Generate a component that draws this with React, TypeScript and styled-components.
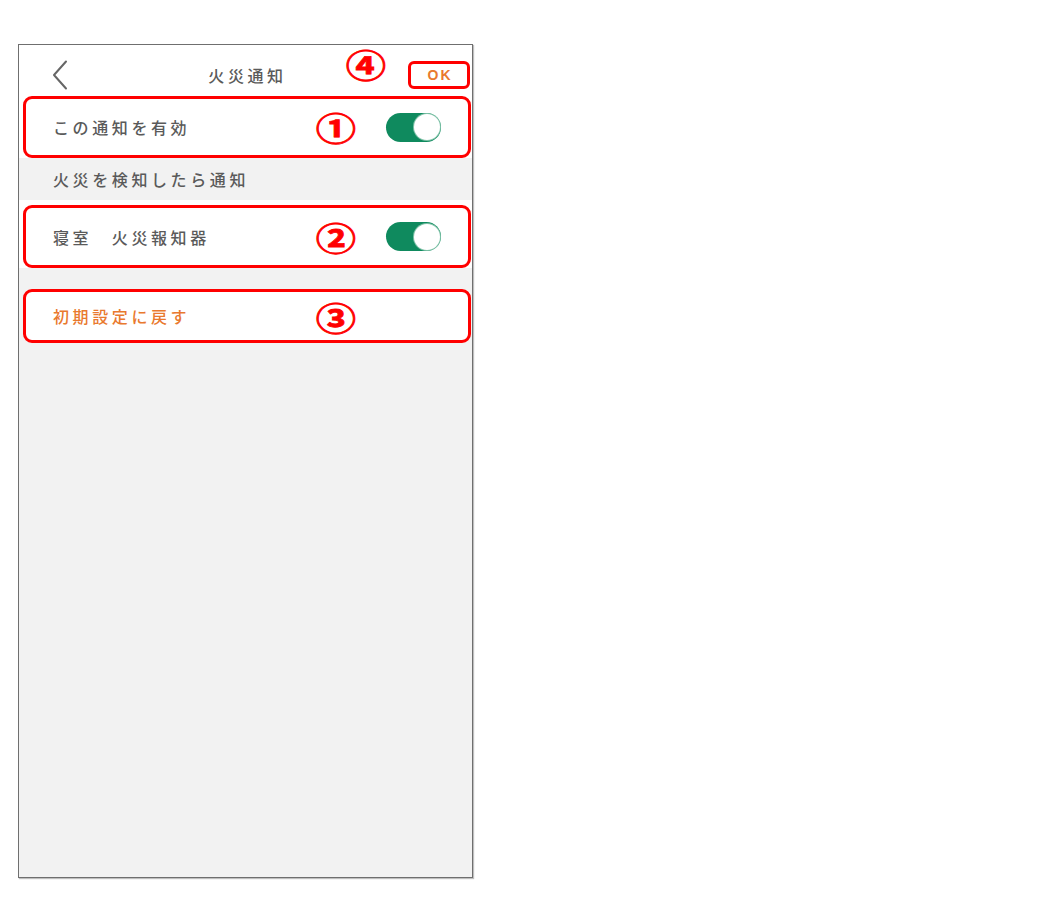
import React from "react";
import styled, { createGlobalStyle } from "styled-components";

const Global = createGlobalStyle`
  html, body { margin: 0; padding: 0; background: #ffffff; }
  body { font-family: "Noto Sans CJK JP", "Noto Sans", sans-serif; }
`;

const Page = styled.div`
  padding: 44px 0 0 18px;
  width: 1058px;
  height: 906px;
  box-sizing: border-box;
`;

const Phone = styled.div`
  position: relative;
  width: 455px;
  height: 834px;
  box-sizing: border-box;
  border: 1px solid #6f6f6f;
  background: #f2f2f2;
  box-shadow: 1px 1px 1px rgba(0, 0, 0, 0.25);
  display: flex;
  flex-direction: column;
`;

const Header = styled.div`
  position: relative;
  height: 51px;
  background: #ffffff;
  display: flex;
  align-items: center;
  justify-content: center;
`;

const Back = styled.svg`
  position: absolute;
  left: 33px;
  top: 15px;
`;

const Title = styled.div`
  font-size: 16px;
  letter-spacing: 3.6px;
  color: #5a5a5a;
  font-weight: 500;
  margin-left: 4px;
  margin-top: 8px;
`;

const OkButton = styled.div`
  position: absolute;
  right: 2px;
  top: 16px;
  width: 62px;
  height: 28px;
  box-sizing: border-box;
  border: 3px solid #ff0000;
  border-radius: 6px;
  display: flex;
  align-items: center;
  justify-content: center;
  padding-left: 2px;
  font-family: "Liberation Sans", Arial, sans-serif;
  font-weight: 700;
  font-size: 14px;
  letter-spacing: 2px;
  color: #e9792e;
`;

const Circled = styled.span<{ $left: number; $top: number }>`
  position: absolute;
  left: ${(p) => p.$left}px;
  top: ${(p) => p.$top}px;
  width: 38px;
  text-align: center;
  font-family: "Noto Sans CJK JP", sans-serif;
  font-weight: 700;
  font-size: 33px;
  line-height: 33px;
  color: #ff0000;
  -webkit-text-stroke: 0.8px #ff0000;
  transform: scaleX(1.22);
`;

const WhiteBand = styled.div<{ $padTop?: number }>`
  background: #ffffff;
  padding-top: ${(p) => p.$padTop ?? 0}px;
`;

const Boxed = styled.div<{ $height: number; $gapTop?: number }>`
  position: relative;
  margin: ${(p) => p.$gapTop ?? 0}px 1px 0 4px;
  height: ${(p) => p.$height}px;
  box-sizing: border-box;
  border: 3px solid #ff0000;
  border-radius: 9px;
  background: #ffffff;
  display: flex;
  align-items: center;
  justify-content: space-between;
  padding: 0 27px 0 27px;
`;

const Label = styled.span<{ $accent?: boolean }>`
  font-size: 16px;
  letter-spacing: 3.6px;
  font-weight: 500;
  color: ${(p) => (p.$accent ? "#e9792e" : "#5a5a5a")};
`;

const SectionLabel = styled.div`
  height: 42px;
  display: flex;
  align-items: center;
  padding-left: 34px;
  font-size: 16px;
  letter-spacing: 3.6px;
  font-weight: 500;
  color: #5a5a5a;
`;

const Toggle = styled.div`
  position: relative;
  width: 55px;
  height: 29px;
  border-radius: 15px;
  background: #0f8a5e;
`;

const Knob = styled.div`
  position: absolute;
  right: 1.5px;
  top: 1.5px;
  width: 26px;
  height: 26px;
  border-radius: 50%;
  background: #ffffff;
  box-shadow: 0 0 0 1px #7fc2a8;
`;

export default function App() {
  return (
    <>
      <Global />
      <Page>
        <Phone>
          <Header>
            <Back width="16" height="30" viewBox="0 0 16 30">
              <polyline
                points="14,1.5 2,15 14,28.5"
                fill="none"
                stroke="#666666"
                strokeWidth="2"
                strokeLinecap="round"
                strokeLinejoin="round"
              />
            </Back>
            <Title>火災通知</Title>
            <Circled $left={328} $top={3}>④</Circled>
            <OkButton>OK</OkButton>
          </Header>
          <WhiteBand>
            <Boxed $height={62}>
              <Label>この通知を有効</Label>
              <Circled $left={291} $top={12}>①</Circled>
              <Toggle>
                <Knob />
              </Toggle>
            </Boxed>
          </WhiteBand>
          <SectionLabel>火災を検知したら通知</SectionLabel>
          <WhiteBand $padTop={5}>
            <Boxed $height={63}>
              <Label>寝室　火災報知器</Label>
              <Circled $left={291} $top={13}>②</Circled>
              <Toggle>
                <Knob />
              </Toggle>
            </Boxed>
          </WhiteBand>
          <Boxed $height={54} $gapTop={21}>
            <Label $accent>初期設定に戻す</Label>
            <Circled $left={291} $top={9}>③</Circled>
          </Boxed>
        </Phone>
      </Page>
    </>
  );
}
